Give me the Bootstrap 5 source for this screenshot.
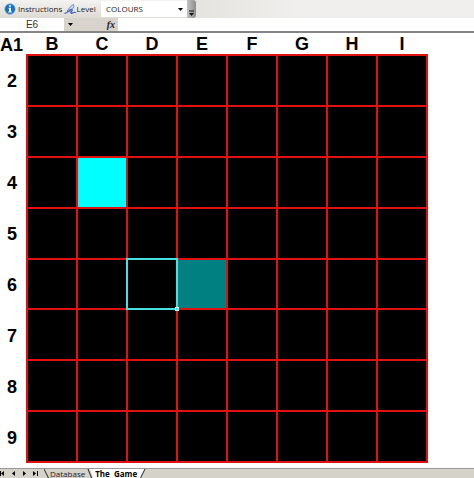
<!DOCTYPE html>
<html lang="en">
<head>
<meta charset="utf-8">
<meta name="viewport" content="width=device-width, initial-scale=1">
<title>The Game</title>
<link href="https://cdn.jsdelivr.net/npm/bootstrap@5.3.0/dist/css/bootstrap.min.css" rel="stylesheet">
<style>
body{font-family:"Open Sans","Liberation Sans",sans-serif;font-size:8px;line-height:12px;color:#222;background:#fff}
.toolbar{height:18px;background:linear-gradient(90deg,#e2e0dc 0,#e6e4df 200px,#f0efed 300px)}
.tools{width:187px;background:linear-gradient(#f4f3f1,#dedbd5)}
.tools .btn{font-size:8px;line-height:12px;color:#222;border-radius:0;gap:2px}
.tools .btn svg,.tools label svg{flex-shrink:0}
.tools label{margin-right:4px}
.level-select{appearance:none;width:86px;height:16px;padding:0 5px;border:0;border-radius:0;background:#fff;color:#222;font-size:8px}
.level{position:relative}
.level svg{position:absolute;right:3px;top:7px;pointer-events:none}
.grip{width:9px;background:linear-gradient(90deg,#c4c2c0,#8d8c8b);border-radius:0 3px 3px 0}
.formula{height:13px;background:#d8d3cd}
.name-box{width:64px;border:0;background:#fff;font:10px/12px "Liberation Sans",Arial,sans-serif;color:#333;padding:0}
.formula-input{border:0;background:#fff;font-size:9px;min-width:0}
.fx{width:54px;font:italic bold 10px/12px "Liberation Serif",serif;padding-right:3px}
.rule{height:2px;background:#858585}
.sheet{padding-right:46px}
.board{border-collapse:collapse;table-layout:fixed;width:100%;height:430px;color:#000;font-family:"Liberation Sans",Arial,sans-serif;font-size:18px;line-height:20px}
.board th{padding:0;text-align:center;font-weight:bold}
.board thead th{height:22px;vertical-align:bottom}
.board thead th:first-child{padding-right:4px;text-align:right}
.board tbody th{padding:2px 2px 0 0}
.board .label-col{width:27px}
.board td{background:#000;border:2px solid #e31010;padding:0}
.board td.cyan{background:#00ffff}
.board td.teal{background:#008080}
.board td.picked{position:relative}
.board td.picked::before{content:"";position:absolute;inset:-2px;border:2px solid #48dfe0}
.board td.picked::after{content:"";position:absolute;right:-3px;bottom:-3px;width:4px;height:4px;background:#48dfe0;border:1px solid #bff}
.tabs{height:10px;margin-top:5px;background:#d5d2c9;border-top:1px solid #999}
.tabs .btn{border-radius:0;color:#111}
.tabs .nav-btn{width:11px}
.tabs .sheet-tab{font-size:8px;color:#222;text-decoration:none;line-height:10px;white-space:pre}
.tabs .open-tab{background:#fff;color:#000;font-weight:bold;padding:0 2px}
.tabs svg{flex-shrink:0}
</style>
<script src="https://cdn.jsdelivr.net/npm/bootstrap@5.3.0/dist/js/bootstrap.bundle.min.js"></script>
</head>
<body>
<header>
<div class="toolbar d-flex">
<div class="tools d-flex align-items-center justify-content-between flex-shrink-0">
<button class="btn p-0 border-0 d-flex align-items-center ms-1" type="button">
<svg width="12" height="12" viewBox="0 0 12 12"><circle cx="6" cy="6" r="5.2" fill="#1672c8" stroke="#74a5d4" stroke-width=".7"/><path d="M5 2.2h2v1.6H5zM4.6 4.8H7v3.6h.8v1H4.3v-1H5V5.8h-.4z" fill="#fff"/></svg>
<span>Instructions</span></button>
<label class="d-flex align-items-center" for="level">
<svg width="13" height="12" viewBox="0 0 13 12" fill="none"><path d="M3 8 7.500 2.500 9.500 1.500 10 4 5.500 9z" fill="#c7d7fa" stroke="#5878cc" stroke-width=".8"/><path d="M.5 10.300C3 10.500 4 8.500 6 7c2-1.300 3 0 1.500 1.500S7 11 9 9.800 11.500 9.500 12 9.800" stroke="#4060bd" stroke-width="1.200"/></svg>
<span>Level</span></label>
<div class="level d-flex"><select class="level-select" id="level"><option>COLOURS</option></select><svg width="6" height="4"><path d="M0 0h5L2.500 3z" fill="#000"/></svg></div>
</div>
<div class="grip flex-shrink-0 d-flex align-items-end justify-content-center"><svg width="7" height="8"><path d="M1 1h5" stroke="#111"/><path d="M1 3h5L3.500 6z" fill="#111"/></svg></div>
</div>
<div class="formula d-flex">
<input class="name-box text-center" aria-label="Name box" value="E6">
<div class="fx d-flex align-items-center justify-content-between"><svg class="ms-1" width="6" height="4"><path d="M0 0h5L2.500 3z" fill="#000"/></svg><span><i>fx</i></span></div>
<input class="formula-input flex-grow-1" aria-label="Formula">
</div>
<div class="rule"></div>
</header>
<main class="sheet">
<table class="board">
<colgroup><col class="label-col"><col span="8"></colgroup>
<thead><tr><th>A1</th><th>B</th><th>C</th><th>D</th><th>E</th><th>F</th><th>G</th><th>H</th><th>I</th></tr></thead>
<tbody>
<tr><th>2</th><td></td><td></td><td></td><td></td><td></td><td></td><td></td><td></td></tr>
<tr><th>3</th><td></td><td></td><td></td><td></td><td></td><td></td><td></td><td></td></tr>
<tr><th>4</th><td></td><td class="cyan"></td><td></td><td></td><td></td><td></td><td></td><td></td></tr>
<tr><th>5</th><td></td><td></td><td></td><td></td><td></td><td></td><td></td><td></td></tr>
<tr><th>6</th><td></td><td></td><td class="picked"></td><td class="teal"></td><td></td><td></td><td></td><td></td></tr>
<tr><th>7</th><td></td><td></td><td></td><td></td><td></td><td></td><td></td><td></td></tr>
<tr><th>8</th><td></td><td></td><td></td><td></td><td></td><td></td><td></td><td></td></tr>
<tr><th>9</th><td></td><td></td><td></td><td></td><td></td><td></td><td></td><td></td></tr>
</tbody>
</table>
</main>
<footer class="tabs d-flex align-items-center overflow-hidden">
<button class="nav-btn btn p-0 border-0 d-flex" type="button" aria-label="First sheet"><svg width="10" height="9"><path d="M0 2h1v5H0zM4 2v5L1 4.500z"/></svg></button>
<button class="nav-btn btn p-0 border-0 d-flex" type="button" aria-label="Previous sheet"><svg width="10" height="9"><path d="M4 2v5L1 4.500z"/></svg></button>
<button class="nav-btn btn p-0 border-0 d-flex" type="button" aria-label="Next sheet"><svg width="10" height="9"><path d="M1 2v5l3-2.500z"/></svg></button>
<button class="nav-btn btn p-0 border-0 d-flex" type="button" aria-label="Last sheet"><svg width="10" height="9"><path d="M0 2v5l3-2.500zM4 2h1v5H4z"/></svg></button>
<svg width="6" height="10"><path d="M0 0 5 10" stroke="#222"/></svg>
<a class="sheet-tab" href="#">Database</a>
<svg width="8" height="10"><path d="M5 0 8 8V0z" fill="#fff"/><path d="M3 0 7 10" stroke="#222"/></svg>
<a class="sheet-tab open-tab" href="#">The  Game</a>
<svg width="7" height="10"><path d="M0 0H6L1 10H0z" fill="#fff"/><path d="M6 0 1 10" stroke="#222"/></svg>
</footer>
</body>
</html>
